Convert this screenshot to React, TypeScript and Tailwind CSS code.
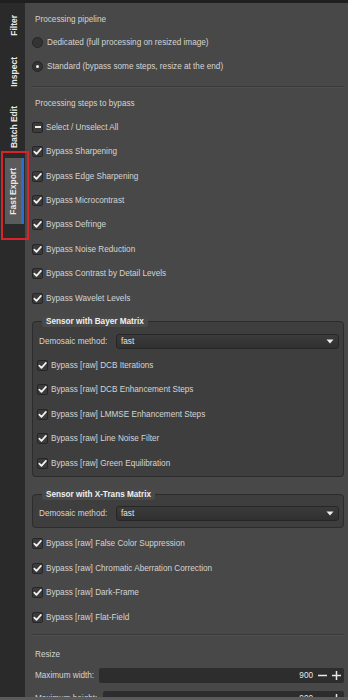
import React from 'react'

/* ─── Small controls ──────────────────────────────────────────────── */

const Check = ({ dash = false }: { dash?: boolean }) => (
    <span className="flex-none w-[11px] h-[11px] rounded-[2px] border border-[#262626] bg-[#3b3b3b] flex items-center justify-center">
        {dash ? (
            <span className="block w-[6px] h-[2px] bg-[#eeeeee]" />
        ) : (
            <svg width={9} height={9} viewBox="0 0 9 9" fill="none" aria-hidden="true">
                <path d="M1.3 4.6 L3.5 6.9 L7.9 1.9" stroke="#f2f2f2" strokeWidth={1.7} strokeLinecap="round" strokeLinejoin="round" />
            </svg>
        )}
    </span>
)

const Radio = ({ on = false }: { on?: boolean }) => (
    <span className="flex-none w-[11px] h-[11px] rounded-full border border-[#252525] bg-[#343434] flex items-center justify-center">
        {on && <span className="block w-[3px] h-[3px] rounded-full bg-[#f0f0f0]" />}
    </span>
)

const CheckRow = ({ label, dash = false }: { label: string; dash?: boolean }) => (
    <div className="h-[24.43px] flex items-center gap-[3px]">
        <Check dash={dash} />
        <span>{label}</span>
    </div>
)

const FrameCheckRow = ({ label }: { label: string }) => (
    <div className="h-[24.5px] flex items-center gap-[3px]">
        <Check />
        <span>{label}</span>
    </div>
)

const Select = ({ value }: { value: string }) => (
    <div className="flex-1 h-[15px] rounded-[3px] border border-[#262626] bg-gradient-to-b from-[#3b3b3b] to-[#303030] flex items-center pl-[4px] pr-[4px] text-[#e6e6e6]">
        <span className="flex-1">{value}</span>
        <svg width={8} height={5} viewBox="0 0 8 5" aria-hidden="true">
            <path d="M0.5 0.5 H7.5 L4 4.5 Z" fill="#eeeeee" />
        </svg>
    </div>
)

const SpinInput = ({ value }: { value: string }) => (
    <div className="flex-1 h-[15px] rounded-[2px] bg-[#2d2d2d] flex items-center justify-end pr-[3px] text-[#e6e6e6]">
        <span>{value}</span>
        <svg className="ml-[5px]" width={9} height={9} viewBox="0 0 9 9" aria-hidden="true">
            <path d="M0 4.5 H9" stroke="#e8e8e8" strokeWidth={1.5} />
        </svg>
        <svg className="ml-[5px]" width={9} height={9} viewBox="0 0 9 9" aria-hidden="true">
            <path d="M0 4.5 H9 M4.5 0 V9" stroke="#e8e8e8" strokeWidth={1.5} />
        </svg>
    </div>
)

const Separator = ({ className = '' }: { className?: string }) => (
    <div className={`h-[2px] border-t border-[#3a3a3a] border-b border-b-[#4f4f4f] ${className}`} />
)

/* ─── Sidebar tabs ────────────────────────────────────────────────── */

const Tab = ({ label, active = false, h }: { label: string; active?: boolean; h: string }) => (
    <div className={`${h} w-[19px] ml-[5px] flex items-center justify-center ${active ? 'bg-[#5b5b5b] border-r-[3px] border-[#2f6bd0]' : ''}`}>
        <span className="[writing-mode:vertical-rl] rotate-180 font-bold text-[8.5px] leading-none text-[#e8e8e8] whitespace-nowrap">
            {label}
        </span>
    </div>
)

/* ─── Page ────────────────────────────────────────────────────────── */

export default function App() {
    return (
        <div
            className="w-[348px] h-[700px] overflow-hidden flex flex-col bg-[#484848] text-[#d4d4d4] text-[8.2px] leading-[11px]"
            style={{ fontFamily: '"Liberation Sans", Arial, sans-serif' }}
        >
            <div className="h-[3px] flex-none bg-[#1f1f1f]" />

            <div className="flex-1 flex min-h-0">
                {/* ── Sidebar ── */}
                <div className="relative z-10 w-[25px] flex-none bg-[#2a2a2a] flex flex-col">
                    <Tab label="Filter" h="h-[44px]" />
                    <Tab label="Inspect" h="h-[50px]" />
                    <Tab label="Batch Edit" h="h-[61px]" />
                    <Tab label="Fast Export" h="h-[66px]" active />
                    <div className="absolute left-[1px] top-[148px] w-[28px] h-[89px] border-2 border-[#d8232a]" />
                </div>

                {/* ── Main panel ── */}
                <div className="flex-1 min-w-0 overflow-hidden pl-[7px] pr-[4px]">
                    <div className="h-[22px] mt-[5px] flex items-center pl-[3px]">Processing pipeline</div>
                    <div className="h-[24px] flex items-center gap-[4px]">
                        <Radio />
                        <span>Dedicated (full processing on resized image)</span>
                    </div>
                    <div className="h-[24px] flex items-center gap-[4px]">
                        <Radio on />
                        <span>Standard (bypass some steps, resize at the end)</span>
                    </div>

                    <Separator className="mt-[8px]" />

                    <div className="h-[23px] mt-[4px] flex items-center pl-[3px]">Processing steps to bypass</div>
                    <CheckRow label="Select / Unselect All" dash />
                    <CheckRow label="Bypass Sharpening" />
                    <CheckRow label="Bypass Edge Sharpening" />
                    <CheckRow label="Bypass Microcontrast" />
                    <CheckRow label="Bypass Defringe" />
                    <CheckRow label="Bypass Noise Reduction" />
                    <CheckRow label="Bypass Contrast by Detail Levels" />
                    <CheckRow label="Bypass Wavelet Levels" />

                    {/* ── Bayer frame ── */}
                    <fieldset className="mt-[6px] rounded-[4px] border border-[#2c2c2c] bg-[#3e3e3e] px-[4px] pb-[1px]">
                        <legend className="ml-[5px] px-[4px] rounded-[3px] bg-[#4a4a4a] text-[#f0f0f0] font-bold">Sensor with Bayer Matrix</legend>
                        <div className="mt-[7px] h-[15px] flex items-center">
                            <span className="w-[79px] pl-[2px] flex-none">Demosaic method:</span>
                            <Select value="fast" />
                        </div>
                        <div className="mt-[3.5px]">
                            <FrameCheckRow label="Bypass [raw] DCB Iterations" />
                            <FrameCheckRow label="Bypass [raw] DCB Enhancement Steps" />
                            <FrameCheckRow label="Bypass [raw] LMMSE Enhancement Steps" />
                            <FrameCheckRow label="Bypass [raw] Line Noise Filter" />
                            <FrameCheckRow label="Bypass [raw] Green Equilibration" />
                        </div>
                    </fieldset>

                    {/* ── X-Trans frame ── */}
                    <fieldset className="mt-[12px] rounded-[4px] border border-[#2c2c2c] bg-[#3e3e3e] px-[4px] pb-[6px]">
                        <legend className="ml-[5px] px-[4px] rounded-[3px] bg-[#4a4a4a] text-[#f0f0f0] font-bold">Sensor with X-Trans Matrix</legend>
                        <div className="mt-[6px] h-[15px] flex items-center">
                            <span className="w-[79px] pl-[2px] flex-none">Demosaic method:</span>
                            <Select value="fast" />
                        </div>
                    </fieldset>

                    <div className="mt-[3px]">
                        <FrameCheckRow label="Bypass [raw] False Color Suppression" />
                        <FrameCheckRow label="Bypass [raw] Chromatic Aberration Correction" />
                        <FrameCheckRow label="Bypass [raw] Dark-Frame" />
                        <FrameCheckRow label="Bypass [raw] Flat-Field" />
                    </div>

                    <Separator className="mt-[5px]" />

                    <div className="h-[20px] mt-[8px] flex items-center pl-[3px]">Resize</div>
                    <div className="mt-[4px] h-[15px] flex items-center">
                        <span className="w-[67px] pl-[3px] flex-none">Maximum width:</span>
                        <SpinInput value="900" />
                    </div>
                    <div className="mt-[8px] h-[15px] flex items-center">
                        <span className="w-[71px] pl-[3px] flex-none">Maximum height:</span>
                        <SpinInput value="900" />
                    </div>
                </div>
            </div>

            <div className="h-[3px] flex-none bg-[#5a5a5a]" />
        </div>
    )
}
